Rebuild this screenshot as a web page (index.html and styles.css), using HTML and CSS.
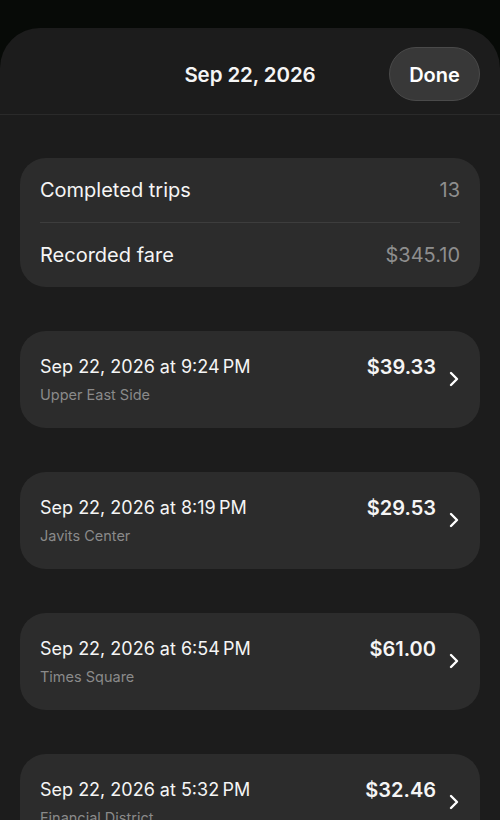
FILE: index.html
```html
<!DOCTYPE html>
<html lang="en">
<head>
    <meta charset="UTF-8">
    <title>Sep 22, 2026</title>
    <link rel="stylesheet" href="styles.css">
</head>
<body>
    <div class="sheet">
        <div class="sheet-head">
            <span class="spacer"></span>
            <h1 class="sheet-title">Sep 22, 2026</h1>
            <a class="done" href="javascript:;">Done</a>
        </div>
        <div class="sheet-body">
            <div class="summary">
                <div class="summary-row">
                    <span>Completed trips</span>
                    <span class="summary-value">13</span>
                </div>
                <div class="summary-row">
                    <span>Recorded fare</span>
                    <span class="summary-value">$345.10</span>
                </div>
            </div>

            <a class="trip" href="#">
                <div class="trip-info">
                    <div class="trip-time">Sep 22, 2026 at 9:24&#8239;PM</div>
                    <div class="trip-place">Upper East Side</div>
                </div>
                <div class="trip-fare">$39.33</div>
                <svg class="chevron" viewBox="0 0 12 16"><path d="M3 2l6 6-6 6"/></svg>
            </a>
            <a class="trip" href="#">
                <div class="trip-info">
                    <div class="trip-time">Sep 22, 2026 at 8:19&#8239;PM</div>
                    <div class="trip-place">Javits Center</div>
                </div>
                <div class="trip-fare">$29.53</div>
                <svg class="chevron" viewBox="0 0 12 16"><path d="M3 2l6 6-6 6"/></svg>
            </a>
            <a class="trip" href="#">
                <div class="trip-info">
                    <div class="trip-time">Sep 22, 2026 at 6:54&#8239;PM</div>
                    <div class="trip-place">Times Square</div>
                </div>
                <div class="trip-fare">$61.00</div>
                <svg class="chevron" viewBox="0 0 12 16"><path d="M3 2l6 6-6 6"/></svg>
            </a>
            <a class="trip" href="#">
                <div class="trip-info">
                    <div class="trip-time">Sep 22, 2026 at 5:32&#8239;PM</div>
                    <div class="trip-place">Financial District</div>
                </div>
                <div class="trip-fare">$32.46</div>
                <svg class="chevron" viewBox="0 0 12 16"><path d="M3 2l6 6-6 6"/></svg>
            </a>
        </div>
    </div>
</body>
</html>
```

FILE: styles.css
```css
html,
body {
    margin: 0;
    height: 100%;
    overflow: hidden;
}
body {
    background: #070a07;
    font-family: Inter, "Noto Sans", sans-serif;
    color: #f5f5f5;
}
.sheet {
    margin-top: 28px;
    min-height: 792px;
    background: #1c1c1c;
    border-radius: 40px 40px 0 0;
}
.sheet-head {
    display: flex;
    align-items: center;
    justify-content: space-between;
    padding: 19px 20px 13px;
    border-bottom: 1px solid #2a2a2a;
}
.spacer {
    width: 91px;
}
.sheet-title {
    margin: 0;
    font-size: 20.5px;
    font-weight: 600;
    letter-spacing: -0.1px;
}
.done {
    display: block;
    width: 89px;
    height: 52px;
    line-height: 54px;
    text-align: center;
    border-radius: 27px;
    background: #383838;
    border: 1px solid #4a4a4a;
    color: #fff;
    text-decoration: none;
    font-size: 20px;
    font-weight: 600;
}
.sheet-body {
    padding: 43px 20px 0;
    display: flex;
    flex-direction: column;
    gap: 44px;
}
.summary {
    background: #2c2c2c;
    border-radius: 26px;
    padding: 0 20px;
}
.summary-row {
    display: flex;
    justify-content: space-between;
    align-items: center;
    height: 64px;
    font-size: 20px;
}
.summary-row + .summary-row {
    border-top: 1px solid #3d3d3d;
}
.summary-value {
    color: #8e8e8e;
}
.trip {
    display: flex;
    align-items: flex-start;
    height: 97px;
    box-sizing: border-box;
    padding: 24px 20px 0;
    background: #2c2c2c;
    border-radius: 26px;
    color: #f5f5f5;
    text-decoration: none;
}
.trip-info {
    flex: 1;
}
.trip-time {
    font-size: 18px;
    line-height: 24px;
}
.trip-place {
    margin-top: 7px;
    font-size: 14.5px;
    line-height: 18px;
    color: #8a8a8a;
}
.trip-fare {
    font-size: 20px;
    font-weight: 600;
    line-height: 24px;
}
.chevron {
    width: 12px;
    height: 16px;
    margin: 16px 0 0 12px;
    fill: none;
    stroke: #fff;
    stroke-width: 2.4;
    stroke-linecap: round;
    stroke-linejoin: round;
}
```
